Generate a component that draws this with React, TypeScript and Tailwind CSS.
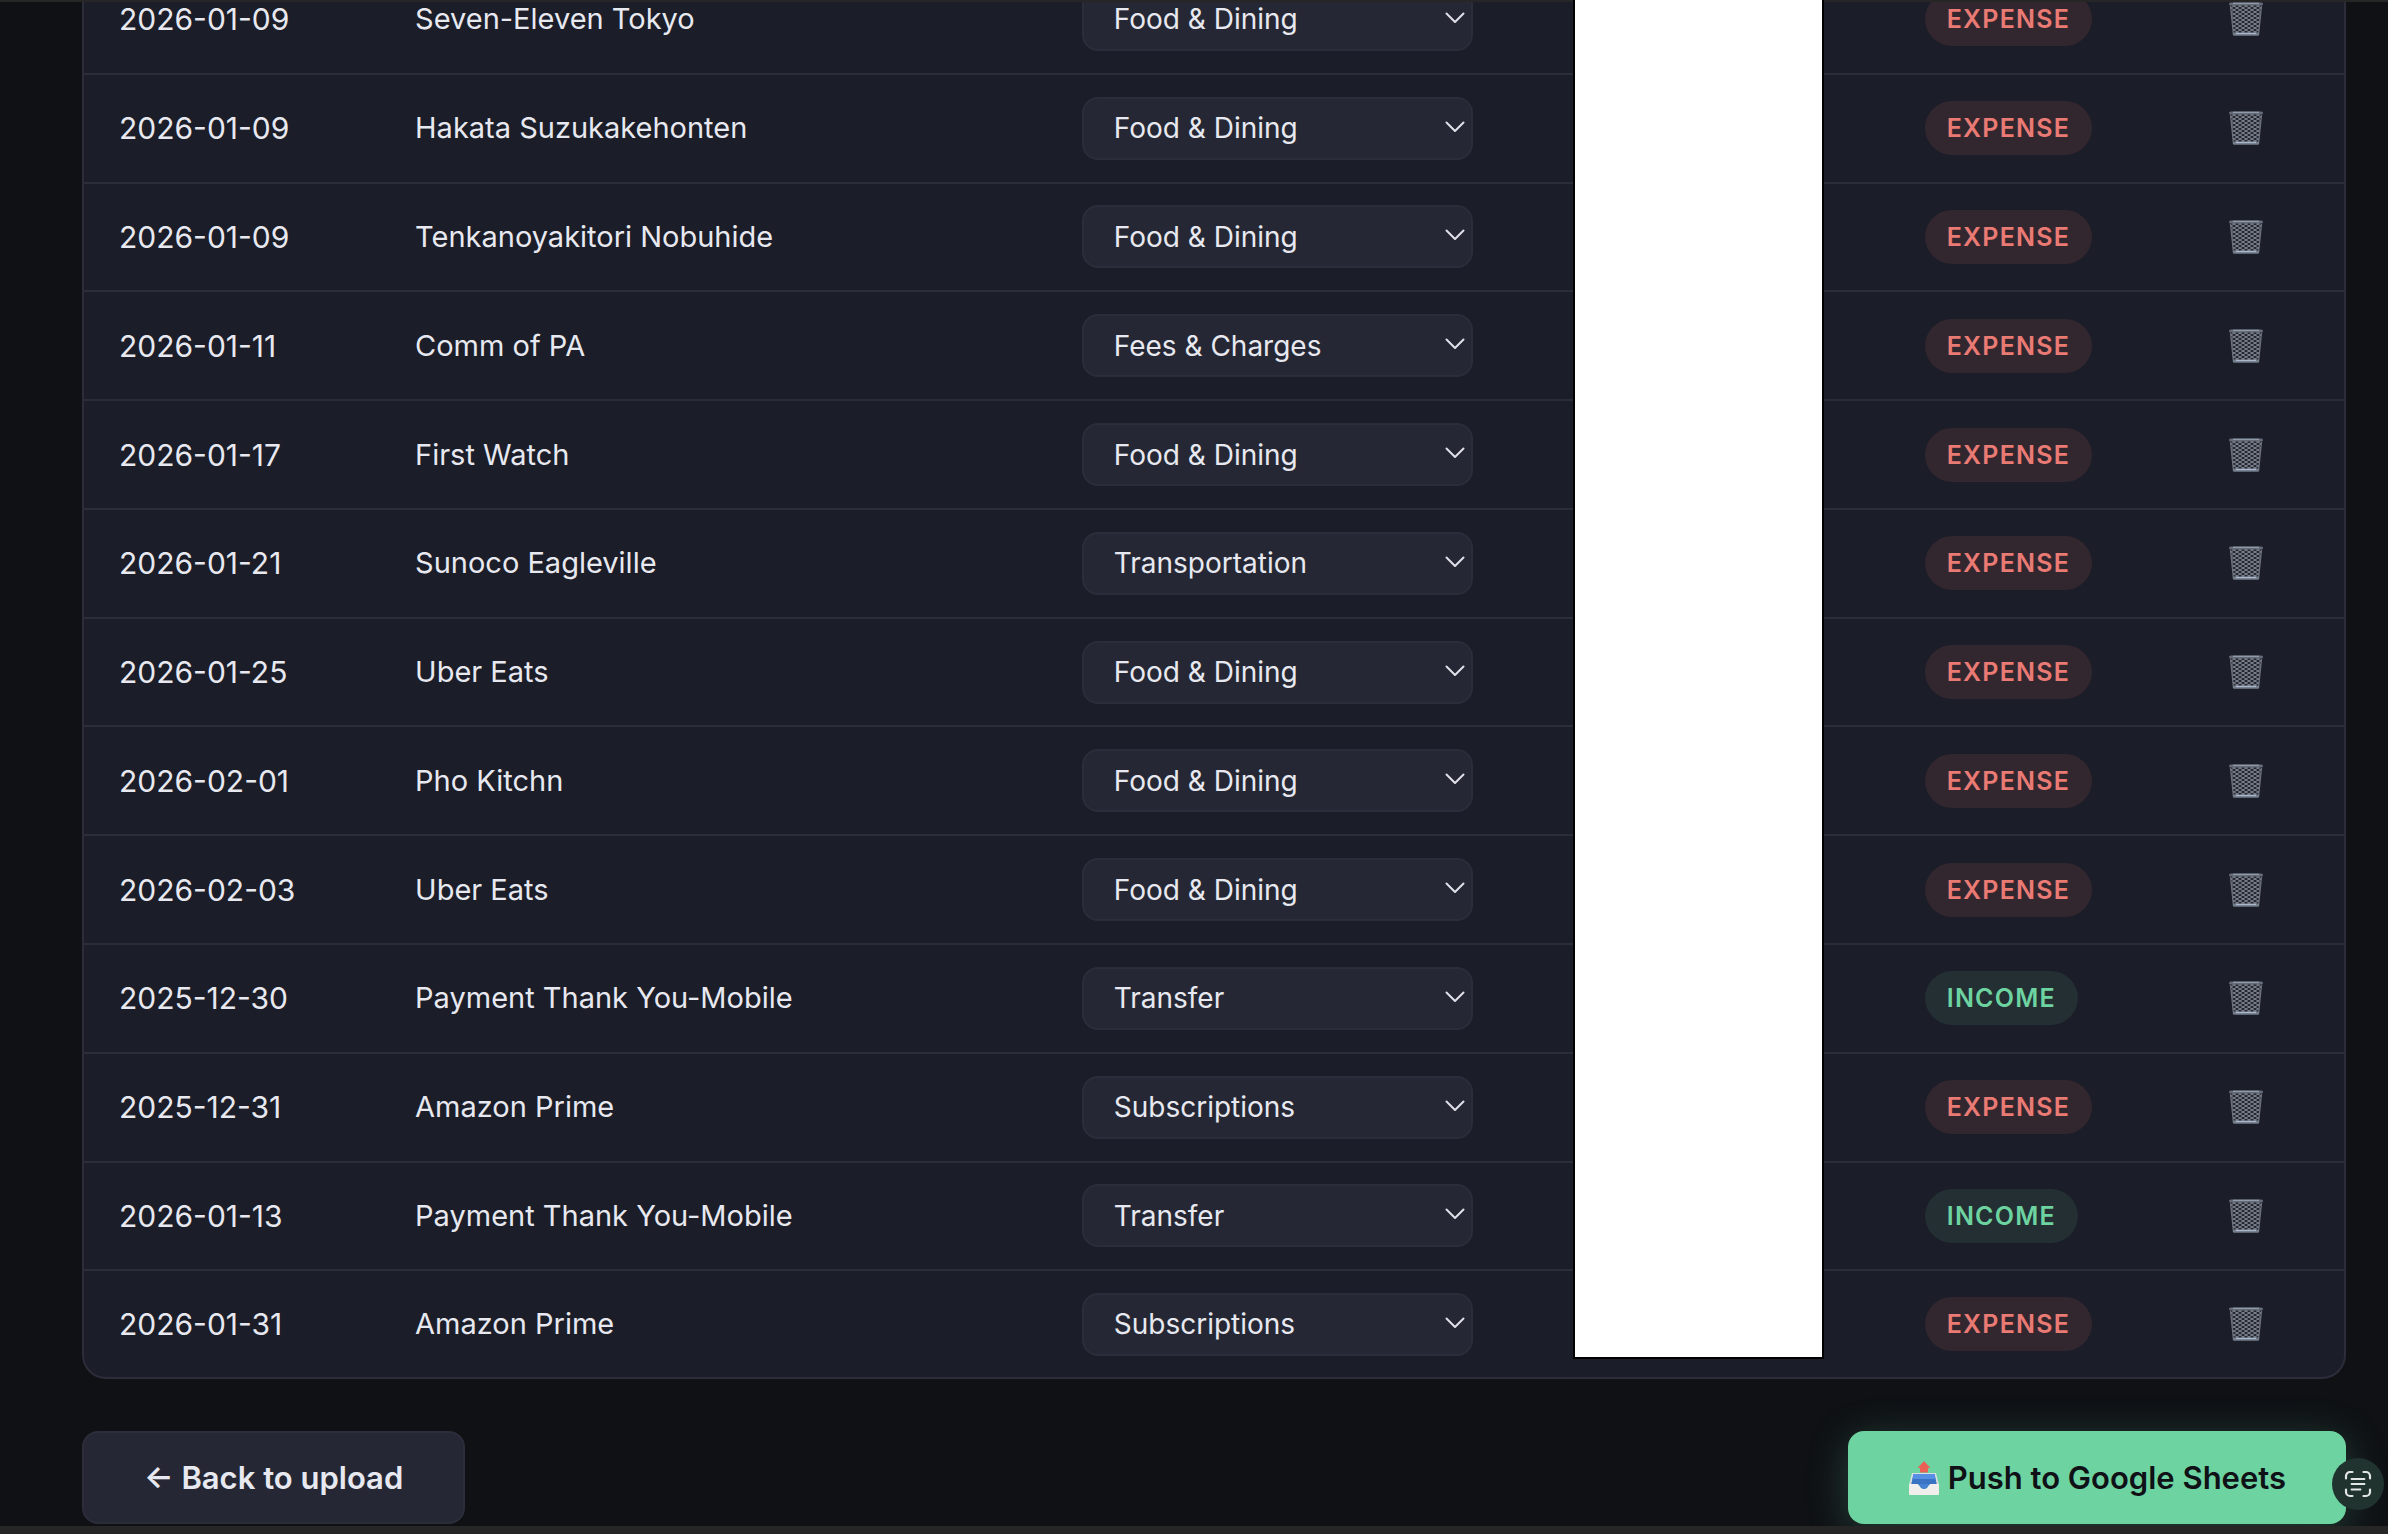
import { useId, useState } from "react";

type Kind = "expense" | "income";

type Transaction = {
  date: string;
  description: string;
  category: string;
  kind: Kind;
};

const CATEGORIES = [
  "Food & Dining",
  "Fees & Charges",
  "Transportation",
  "Transfer",
  "Subscriptions",
];

const TRANSACTIONS: Transaction[] = [
  { date: "2026-01-09", description: "Seven-Eleven Tokyo", category: "Food & Dining", kind: "expense" },
  { date: "2026-01-09", description: "Hakata Suzukakehonten", category: "Food & Dining", kind: "expense" },
  { date: "2026-01-09", description: "Tenkanoyakitori Nobuhide", category: "Food & Dining", kind: "expense" },
  { date: "2026-01-11", description: "Comm of PA", category: "Fees & Charges", kind: "expense" },
  { date: "2026-01-17", description: "First Watch", category: "Food & Dining", kind: "expense" },
  { date: "2026-01-21", description: "Sunoco Eagleville", category: "Transportation", kind: "expense" },
  { date: "2026-01-25", description: "Uber Eats", category: "Food & Dining", kind: "expense" },
  { date: "2026-02-01", description: "Pho Kitchn", category: "Food & Dining", kind: "expense" },
  { date: "2026-02-03", description: "Uber Eats", category: "Food & Dining", kind: "expense" },
  { date: "2025-12-30", description: "Payment Thank You-Mobile", category: "Transfer", kind: "income" },
  { date: "2025-12-31", description: "Amazon Prime", category: "Subscriptions", kind: "expense" },
  { date: "2026-01-13", description: "Payment Thank You-Mobile", category: "Transfer", kind: "income" },
  { date: "2026-01-31", description: "Amazon Prime", category: "Subscriptions", kind: "expense" },
];

function TrashIcon() {
  const meshId = useId();

  return (
    <svg aria-hidden="true" className="size-9" viewBox="0 0 36 36" fill="none">
      <defs>
        <pattern height="4" id={meshId} patternUnits="userSpaceOnUse" width="6" x="0" y="1">
          <rect width="6" height="4" fill="#252833" />
          <path d="M0 0 6 4M6 0 0 4" stroke="#858b96" strokeWidth="1" />
        </pattern>
      </defs>
      <path d="M2.500 3.500 5.500 34h25l3-30.500z" fill={`url(#${meshId})`} />
      <path d="M2.500 5 5.500 34M33.500 5 30.500 34" stroke="#6b707b" strokeWidth="1.300" />
      <rect x="1" y="1.500" width="34" height="3" rx="1.500" fill="#656b77" />
      <path d="M5 2.300h26" stroke="#95a0b2" strokeWidth="1.200" />
      <rect x="5" y="31.500" width="26" height="3.200" rx="1" fill="#747d8b" />
      <path d="M8 32.500h20" stroke="#a9b8cd" strokeWidth="1.200" />
    </svg>
  );
}

function OutboxIcon() {
  return (
    <svg aria-hidden="true" className="h-9 w-8" viewBox="0 0 32 36">
      <path d="M4 13h24l3 12H1z" fill="#d9dfe3" />
      <path d="M5.500 14h21l2.500 11H3z" fill="#3a73c4" />
      <path d="M5.500 14h21l1 5h-23z" fill="#5590e4" />
      <path d="M1 24h8.500c2 0 2.500 5 6.500 5s4.500-5 6.500-5H31v10a1 1 0 0 1-1 1H2a1 1 0 0 1-1-1z" fill="#f1efed" />
      <path d="M9.500 24c2 0 2.500 5 6.500 5s4.500-5 6.500-5z" fill="#4681d2" />
      <path d="M16 1 22.500 8H20v4.500h-8V8H9.500z" fill="#ec6156" />
    </svg>
  );
}

function ScanTextIcon() {
  return (
    <svg aria-hidden="true" className="size-7" viewBox="0 0 28 28" fill="none" stroke="#e3e6e6" strokeLinecap="round">
      <path
        d="M2 8.500V6a4 4 0 0 1 4-4h2.500M19.500 2H22a4 4 0 0 1 4 4v2.500M26 19.500V22a4 4 0 0 1-4 4h-2.500M8.500 26H6a4 4 0 0 1-4-4v-2.500"
        strokeWidth="2.200"
      />
      <path d="M7.500 9h13M7.500 14h13M7.500 19.500h9" strokeWidth="1.800" />
    </svg>
  );
}

function CategorySelect({
  label,
  value,
  onChange,
}: {
  label: string;
  value: string;
  onChange: (value: string) => void;
}) {
  return (
    <div className="relative">
      <select
        aria-label={label}
        className="block h-[63px] w-full appearance-none rounded-2xl border-2 border-[#2b2d3b] bg-[#252834] pr-12 pl-[30px] text-[28px] leading-9 text-[#e8e9f0]"
        onChange={(event) => onChange(event.target.value)}
        value={value}
      >
        {CATEGORIES.map((category) => (
          <option key={category}>{category}</option>
        ))}
      </select>
      <svg
        aria-hidden="true"
        className="pointer-events-none absolute top-6 right-2 h-3 w-5"
        fill="none"
        viewBox="0 0 20 12"
      >
        <path d="m1.500 1.500 8.500 8.500 8.500-8.500" stroke="#dfe0e8" strokeLinecap="round" strokeLinejoin="round" strokeWidth="2" />
      </svg>
    </div>
  );
}

function KindBadge({ kind }: { kind: Kind }) {
  return (
    <span
      className={`block w-fit rounded-full px-[22px] py-2 text-[25px] leading-[38px] font-semibold tracking-wider uppercase ${
        kind === "income" ? "bg-[#232f33] text-[#6dd3a0]" : "bg-[#33272f] text-[#ea7a74]"
      }`}
    >
      {kind}
    </span>
  );
}

export default function App() {
  const [rows, setRows] = useState(() =>
    TRANSACTIONS.map((transaction, id) => ({ id, ...transaction })),
  );

  function setCategory(id: number, category: string) {
    setRows((current) =>
      current.map((row) => (row.id === id ? { ...row, category } : row)),
    );
  }

  function removeRow(id: number) {
    setRows((current) => current.filter((row) => row.id !== id));
  }

  return (
    <div className="relative flex h-screen flex-col overflow-hidden border-b-8 border-[#262626] bg-[#0f1115] font-['Inter','Liberation_Sans',sans-serif] text-[#e8e9f0]">
      <div className="absolute inset-x-0 top-0 z-10 h-0.5 bg-[#262626]" />
      <main className="flex min-h-0 flex-1 flex-col justify-end gap-[52px] pr-[42px] pb-0.5 pl-[82px]">
        <section className="relative shrink-0 rounded-3xl border-2 border-[#2b2d3b] bg-[#1b1d28]">
          <table className="h-[1411px] w-full table-fixed border-separate border-spacing-0 text-left text-[29px] leading-9">
            <colgroup>
              <col className="w-[13.1%]" />
              <col className="w-[29.5%]" />
              <col className="w-[20.4%]" />
              <col className="w-[16.9%]" />
              <col className="w-[11.4%]" />
              <col className="w-[8.7%]" />
            </colgroup>
            <tbody>
              {rows.map((row) => (
                <tr className="group" key={row.id}>
                  <td className="border-b-2 border-[#2b2d3b] px-[35px] text-[30px] group-last:border-b-0">
                    {row.date}
                  </td>
                  <td className="border-b-2 border-[#2b2d3b] px-[35px] group-last:border-b-0">
                    {row.description}
                  </td>
                  <td className="border-b-2 border-[#2b2d3b] px-[35px] group-last:border-b-0">
                    <CategorySelect
                      label={`Category for ${row.description}`}
                      onChange={(category) => setCategory(row.id, category)}
                      value={row.category}
                    />
                  </td>
                  <td className="border-b-2 border-[#2b2d3b] group-last:border-b-0" />
                  <td className="border-b-2 border-[#2b2d3b] px-[35px] group-last:border-b-0">
                    <KindBadge kind={row.kind} />
                  </td>
                  <td className="border-b-2 border-[#2b2d3b] group-last:border-b-0">
                    <button
                      aria-label={`Delete ${row.description}`}
                      className="mx-auto block p-2"
                      onClick={() => removeRow(row.id)}
                      type="button"
                    >
                      <TrashIcon />
                    </button>
                  </td>
                </tr>
              ))}
            </tbody>
          </table>
          <div className="absolute top-0 right-[23%] bottom-[18px] z-20 w-[11.1%] border-2 border-black bg-white" />
        </section>

        <div className="flex shrink-0 items-center justify-between">
          <button
            className="h-[93px] rounded-2xl border-2 border-[#2b2d3b] bg-[#252834] px-[60px] text-[31px] leading-9 font-semibold"
            type="button"
          >
            ← Back to upload
          </button>
          <button
            className="flex h-[93px] items-center gap-2 rounded-2xl bg-[#6dd3a0] px-[60px] text-[31px] leading-9 font-semibold text-[#0f1117] shadow-[0_8px_40px_rgba(109,211,160,0.25)]"
            type="button"
          >
            <OutboxIcon />
            Push to Google Sheets
          </button>
        </div>
      </main>

      <button
        aria-label="Scan text"
        className="absolute right-1 bottom-4 flex size-[52px] items-center justify-center rounded-full bg-[#20332f]"
        type="button"
      >
        <ScanTextIcon />
      </button>
    </div>
  );
}
